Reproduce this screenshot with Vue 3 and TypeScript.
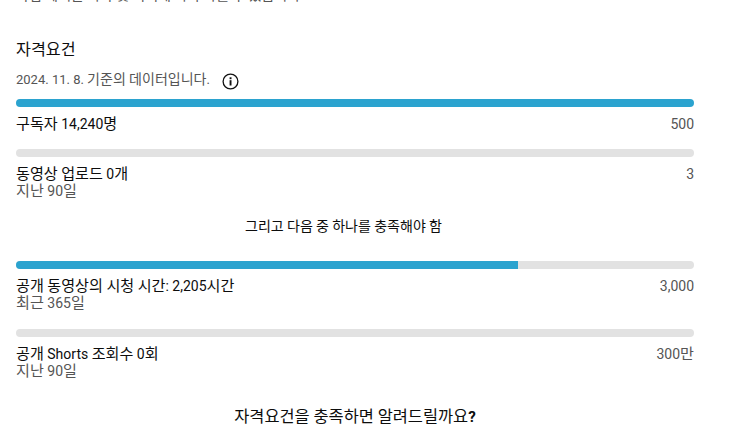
<script setup lang="ts">
interface Req {
  label: string
  sub?: string
  goal: string
  pct: number
}
const first: Req[] = [
  { label: '구독자 14,240명', goal: '500', pct: 100 },
  { label: '동영상 업로드 0개', sub: '지난 90일', goal: '3', pct: 0 },
]
const second: Req[] = [
  { label: '공개 동영상의 시청 시간: 2,205시간', sub: '최근 365일', goal: '3,000', pct: 74 },
  { label: '공개 Shorts 조회수 0회', sub: '지난 90일', goal: '300만', pct: 0 },
]
// Hangul runs are set slightly larger than the Latin text around them.
function runs(text: string): { t: string; ko: boolean }[] {
  return (text.match(/[\uAC00-\uD7A3]+|[^\uAC00-\uD7A3]+/g) ?? []).map((t) => ({
    t,
    ko: /[\uAC00-\uD7A3]/.test(t),
  }))
}
const groups = [first, second]
</script>

<template>
  <main class="page">
    <p class="cut"><template v-for="(p, i) in runs('가입 혜택은 국가 및 지역에 따라 다를 수 있습니다')" :key="i"><span :class="{ ko: p.ko }">{{ p.t }}</span></template></p>
    <h2 class="title"><span class="ko">자격요건</span></h2>
    <div class="date">
      <span><template v-for="(p, i) in runs('2024. 11. 8. 기준의 데이터입니다.')" :key="i"><span :class="{ ko: p.ko }">{{ p.t }}</span></template></span>
      <svg class="info" width="17" height="17" viewBox="0 0 17 17" aria-hidden="true">
        <circle cx="8.5" cy="8.5" r="7.4" fill="none" stroke="#111" stroke-width="1.3" />
        <rect x="7.6" y="7.2" width="1.9" height="5.3" fill="#111" />
        <rect x="7.6" y="4.3" width="1.9" height="1.9" fill="#111" />
      </svg>
    </div>
    <template v-for="(group, g) in groups" :key="g">
      <section class="group">
        <div v-for="r in group" :key="r.label" class="req">
          <div class="track"><div class="fill" :style="{ width: r.pct + '%' }"></div></div>
          <div class="row">
            <div>
              <div class="label"><template v-for="(p, i) in runs(r.label)" :key="i"><span :class="{ ko: p.ko }">{{ p.t }}</span></template></div>
              <div v-if="r.sub" class="sub"><template v-for="(p, i) in runs(r.sub)" :key="i"><span :class="{ ko: p.ko }">{{ p.t }}</span></template></div>
            </div>
            <div class="goal"><template v-for="(p, i) in runs(r.goal)" :key="i"><span :class="{ ko: p.ko }">{{ p.t }}</span></template></div>
          </div>
        </div>
      </section>
      <p v-if="g === 0" class="middle"><template v-for="(p, i) in runs('그리고 다음 중 하나를 충족해야 함')" :key="i"><span :class="{ ko: p.ko }">{{ p.t }}</span></template></p>
    </template>
    <p class="notify"><span class="ko">자격요건을</span> <span class="ko">충족하면</span> <span class="ko">알려드릴까요</span><b>?</b></p>
  </main>
</template>

<style>
html, body { margin: 0; background: #fff; overflow: hidden; }
</style>

<style scoped>
.page {
  width: 732px;
  height: 429px;
  box-sizing: border-box;
  padding: 0 38px 0 16px;
  overflow: hidden;
  font-family: Roboto, "Noto Sans CJK KR", sans-serif;
  font-size: 14px;
  line-height: 20px;
  color: #0d0d0d;
}
.ko { font-size: 1.08em; line-height: 1; }
.cut {
  margin: -13px 0 0;
  height: 18px;
  line-height: 18px;
  font-size: 13px;
  color: #555;
  white-space: nowrap;
}
.title {
  margin: 34px 0 0;
  height: 22px;
  font-size: 15px;
  line-height: 22px;
  font-weight: 400;
}
.date {
  display: flex;
  align-items: center;
  gap: 12px;
  margin: 9px 0;
  height: 20px;
  font-size: 13px;
  color: #555;
}
.info { display: block; margin-top: 3px; }
.group { display: flex; flex-direction: column; }
.req { padding-bottom: 17px; }
.track {
  height: 8px;
  border-radius: 4px;
  background: #e2e2e2;
  overflow: hidden;
}
.fill { height: 100%; background: #2ba3cf; }
.row {
  display: flex;
  justify-content: space-between;
  margin-top: 7px;
}
.label { height: 18px; }
.sub { height: 18px; line-height: 18px; color: #555; }
.goal { height: 18px; color: #555; }
.middle {
  margin: 1px 0 25px;
  height: 18px;
  padding-right: 23px;
  line-height: 18px;
  text-align: center;
  font-size: 13px;
}
.notify {
  margin: 10px 0 0;
  text-align: center;
  font-size: 15.2px;
}
</style>
